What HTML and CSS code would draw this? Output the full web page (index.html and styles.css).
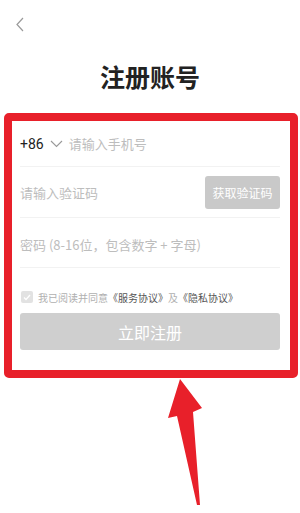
FILE: index.html
```html
<!DOCTYPE html>
<html lang="zh-CN">
<head>
    <meta charset="UTF-8">
    <meta name="viewport" content="width=device-width, initial-scale=1.0">
    <title>注册账号</title>
    <link rel="stylesheet" href="styles.css">
</head>
<body>

    <div class="topbar">
        <svg class="back" width="8" height="15" viewBox="0 0 8 15">
            <path d="M7 1 L1 7.5 L7 14" fill="none" stroke="#9a9a9a" stroke-width="1.2"/>
        </svg>
    </div>

    <h1 class="title">注册账号</h1>

    <form class="register">
        <div class="field">
            <span class="area">+86</span>
            <svg class="area-arrow" width="13" height="8" viewBox="0 0 13 8">
                <path d="M1 1 L6.5 6.5 L12 1" fill="none" stroke="#999" stroke-width="1.1"/>
            </svg>
            <span class="placeholder">请输入手机号</span>
        </div>
        <div class="field field-code">
            <span class="placeholder">请输入验证码</span>
            <button type="button" class="btn-code">获取验证码</button>
        </div>
        <div class="field field-pwd">
            <span class="placeholder">密码 (8-16位，包含数字 + 字母)</span>
        </div>

        <div class="agree">
            <span class="checkbox">
                <svg width="8" height="7" viewBox="0 0 8 7">
                    <path d="M1 3.5 L3 5.5 L7 1" fill="none" stroke="#fff" stroke-width="1.3"/>
                </svg>
            </span>
            <span>我已阅读并同意</span>
            <a class="doc">《服务协议》</a>
            <span>及</span>
            <a class="doc">《隐私协议》</a>
        </div>

        <button type="button" class="btn-submit">立即注册</button>
    </form>

    <svg class="pointer" width="300" height="513" viewBox="0 0 300 513">
        <path d="M180 379 L202 408 L193 412 L200 505 L197 505 L177 416 L168 418 Z" fill="#e8202a"/>
    </svg>

</body>
</html>
```

FILE: styles.css
```css
* {
    margin: 0;
    padding: 0;
    box-sizing: border-box;
}

body {
    font-family: 'Noto Sans CJK SC', 'Noto Sans', sans-serif;
    background-color: #fff;
    color: #222;
    width: 300px;
    min-height: 513px;
    position: relative;
    overflow: hidden;
}

.topbar {
    height: 48px;
    padding: 17px 0 0 16px;
}

.back {
    display: block;
}

.title {
    text-align: center;
    font-size: 25px;
    font-weight: bold;
    line-height: 36px;
    height: 36px;
    margin: 10px 0 19px;
    color: #222;
}

.register {
    margin: 0 2px 0 4px;
    border: 8px solid #e8202a;
    border-radius: 5px;
    padding: 0 10px 20px 8px;
}

.field {
    display: flex;
    align-items: center;
    height: 46px;
    border-bottom: 1px solid #f2f2f2;
    font-size: 13px;
}

.field-code {
    height: 51px;
    justify-content: space-between;
}

.field-pwd {
    height: 50px;
    padding-top: 4px;
}

.area {
    font-size: 14px;
    color: #222;
    font-family: 'Roboto', 'Noto Sans', sans-serif;
}

.area-arrow {
    margin: 0 6px 0 6px;
}

.placeholder {
    color: #bdbdbd;
}

.btn-code {
    width: 75px;
    height: 33px;
    border: none;
    border-radius: 3px;
    background-color: #c9c9c9;
    color: #fff;
    font-family: inherit;
    font-size: 12px;
}

.agree {
    display: flex;
    align-items: center;
    height: 26px;
    margin-top: 16px;
    font-size: 10px;
    color: #b0b0b0;
}

.checkbox {
    width: 12px;
    height: 12px;
    background-color: #e2e2e2;
    border-radius: 2px;
    display: flex;
    align-items: center;
    justify-content: center;
    margin: 0 5px 0 1px;
}

.doc {
    color: #555;
}

.btn-submit {
    display: block;
    width: 100%;
    height: 37px;
    margin-top: 3px;
    border: none;
    border-radius: 3px;
    background-color: #cfcfcf;
    color: #fff;
    font-family: inherit;
    font-size: 16px;
}

.pointer {
    position: absolute;
    top: 0;
    left: 0;
    pointer-events: none;
}
```
